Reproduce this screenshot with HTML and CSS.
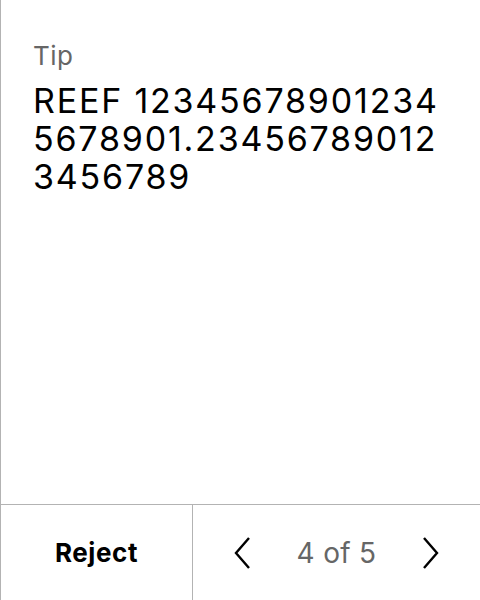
FILE: index.html
```html
<!DOCTYPE html>
<html>
<head>
<meta charset="utf-8">
<link rel="stylesheet" href="styles.css">
</head>
<body>
<div class="panel">
  <div class="content">
    <div class="label">Tip</div>
    <div class="value">REEF 123456789012345678901.234567890123456789</div>
  </div>
  <div class="footer">
    <div class="reject">Reject</div>
    <div class="pager">
      <svg class="chev" width="24" height="36" viewBox="0 0 24 36"><path d="M18 3 L5 18 L18 33" fill="none" stroke="#000" stroke-width="2.4"/></svg>
      <span class="count">4 of 5</span>
      <svg class="chev" width="24" height="36" viewBox="0 0 24 36"><path d="M6 3 L19 18 L6 33" fill="none" stroke="#000" stroke-width="2.4"/></svg>
    </div>
  </div>
</div>
</body>
</html>
```
FILE: styles.css
```css
html, body { margin: 0; padding: 0; background: #fff; }
body { font-family: Inter, "Noto Sans", sans-serif; }
.panel {
  width: 480px; height: 600px; box-sizing: border-box;
  border-left: 1px solid #b3b3b3;
  display: flex; flex-direction: column;
}
.content { flex: 1; padding: 38px 30px 0 32px; }
.label { font-size: 26px; color: #666; line-height: 36px; letter-spacing: 0.5px; }
.value { font-size: 34px; color: #000; line-height: 38px; margin-top: 8px; word-break: break-all; letter-spacing: 1.8px; }
.footer {
  height: 95px; border-top: 1px solid #b3b3b3; display: flex;
}
.reject {
  width: 191px; border-right: 1px solid #b3b3b3;
  display: flex; align-items: center; justify-content: center;
  font-size: 26px; font-weight: 700; letter-spacing: 0.6px;
}
.pager {
  flex: 1; display: flex; align-items: center; justify-content: space-between;
  padding: 0 38px 0 38px;
}
.count { font-size: 28px; color: #666; letter-spacing: 0.3px; }
```
